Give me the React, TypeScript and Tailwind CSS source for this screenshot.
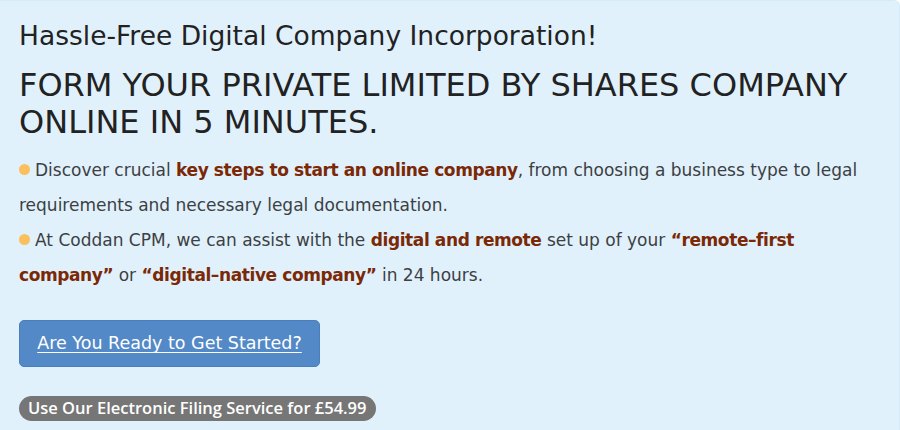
import React from "react";

const Dot = () => (
  <span className="inline-block w-[11px] h-[11px] rounded-full bg-[#fbbf5e] mr-[5px] align-[1px]" />
);

const B = ({ children }: { children: React.ReactNode }) => (
  <b className="font-bold text-[#7a2806] tracking-[-0.4px]">{children}</b>
);

export default function App() {
  return (
    <div className="w-[900px] h-[430px] overflow-hidden bg-[#e1f1fc] border-t border-r border-[#d3ecfa] rounded-tr-[6px] px-[19px] pt-[16px]" style={{ fontFamily: '"DejaVu Sans", sans-serif' }}>
      <h2 className="text-[26.5px] leading-[38px] text-[#222]">Hassle-Free Digital Company Incorporation!</h2>
      <h1 className="text-[32px] leading-[37px] text-[#222] mt-[12px]">
        FORM YOUR PRIVATE LIMITED BY SHARES COMPANY<br />ONLINE IN 5 MINUTES.
      </h1>
      <div className="mt-[12px] text-[17px] leading-[35px] text-[#3c4043]">
        <p>
          <Dot />Discover crucial <B>key steps to start an online company</B>, from choosing a business type to legal requirements and necessary legal documentation.
        </p>
        <p>
          <Dot />At Coddan CPM, we can assist with the <B>digital and remote</B> set up of your <B>“remote–first company”</B> or <B>“digital–native company”</B> in 24 hours.
        </p>
      </div>
      <a href="#" className="mt-[27px] inline-flex items-center justify-center w-[301px] h-[47px] rounded-[5px] bg-[#5389c7] border border-[#4a7fbd] text-white text-[17.5px] underline underline-offset-[3px]">
        Are You Ready to Get Started?
      </a>
      <div className="mt-[29px]">
        <span className="inline-flex items-center h-[25px] px-[9px] rounded-full bg-[#767676] text-white text-[16.5px] font-semibold" style={{ fontFamily: '"Open Sans", sans-serif' }}>
          Use Our Electronic Filing Service for £54.99
        </span>
      </div>
    </div>
  );
}
